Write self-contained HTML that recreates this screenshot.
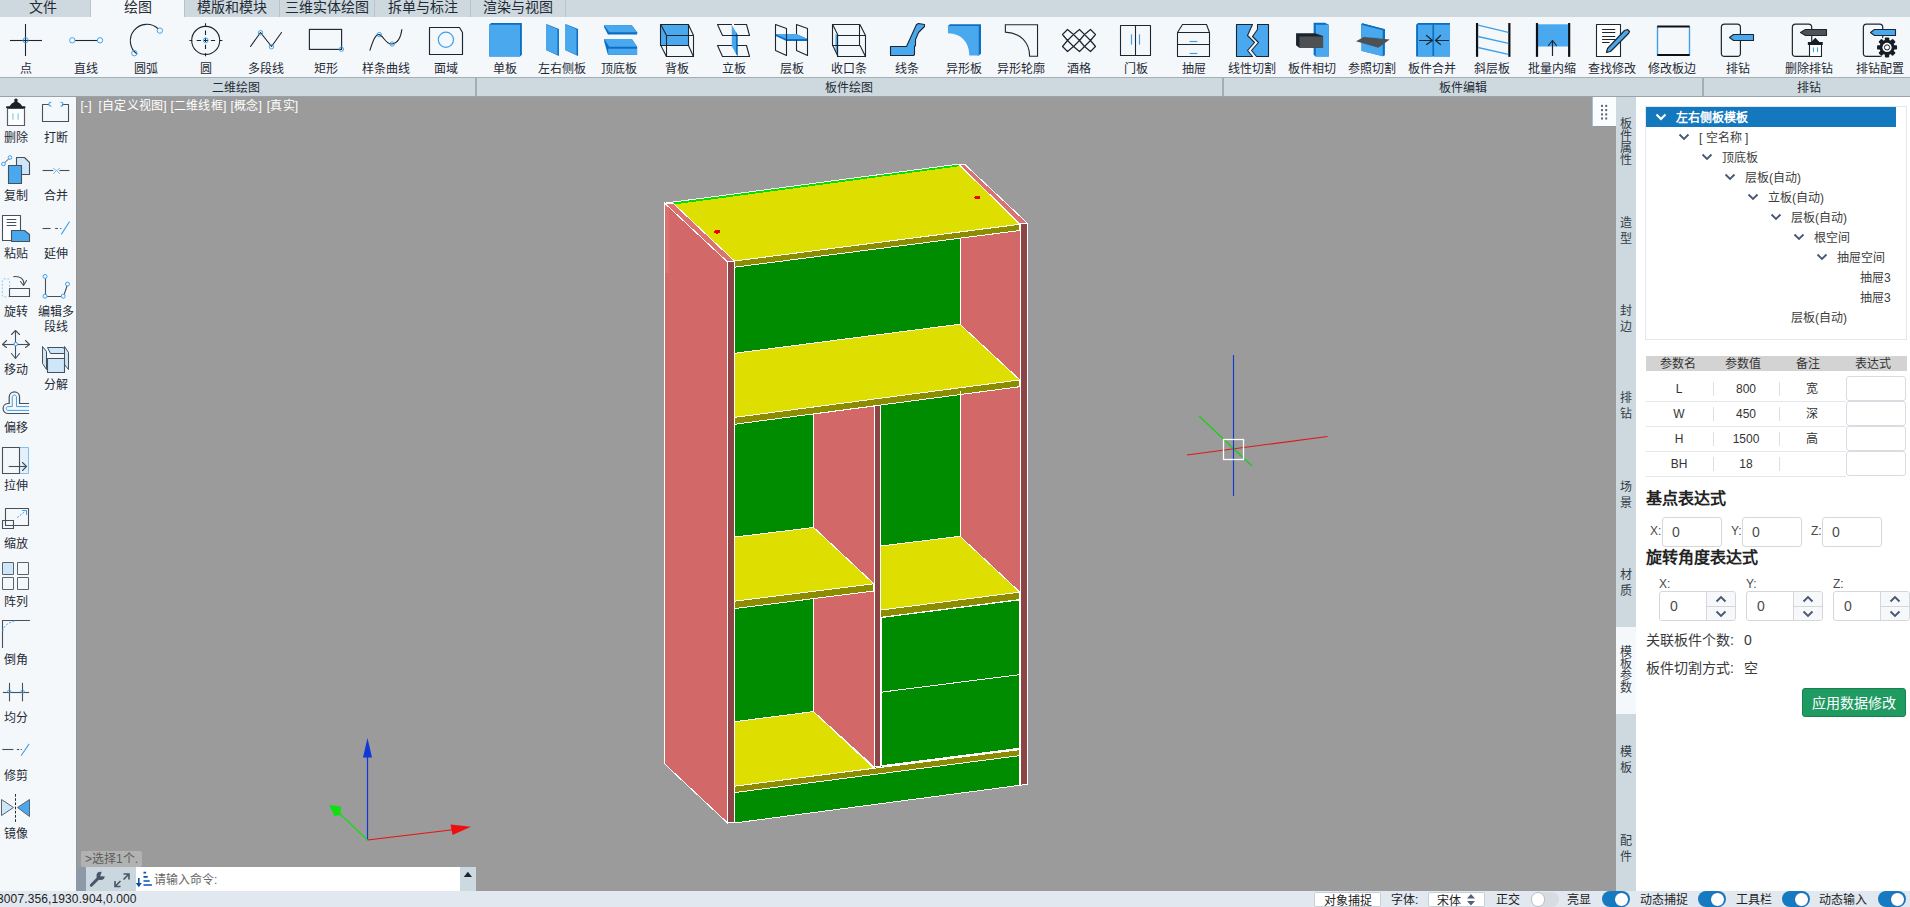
<!DOCTYPE html>
<html lang="zh-CN"><head><meta charset="utf-8"><title>CAD</title>
<style>
html,body{margin:0;padding:0;}
body{width:1910px;height:907px;overflow:hidden;position:relative;background:#f5f8fb;font-family:"Liberation Sans",sans-serif;font-size:12px;color:#1f2a35;}
div,span{box-sizing:border-box;}
.abs{position:absolute;}
#tabbar{position:absolute;left:0;top:0;width:1910px;height:17px;background:#ced9df;}
.tab{position:absolute;top:0;height:17px;line-height:15px;font-size:14px;text-align:center;color:#1f2a35;border-right:1px solid #b9c3cb;white-space:nowrap;}
.tab.act{background:#f5f8fb;border-right:1px solid #b9c3cb;}
#ribbon{position:absolute;left:0;top:17px;width:1910px;height:60px;background:#f5f8fb;}
.rl{position:absolute;top:62px;width:80px;height:15px;line-height:15px;text-align:center;font-size:12px;white-space:nowrap;color:#1f2a35;}
#grp{position:absolute;left:0;top:77px;width:1910px;height:20px;background:#ced9df;border-top:1px solid #a5afb7;border-bottom:1px solid #99a3ab;}
.gl{position:absolute;top:2px;height:17px;line-height:17px;text-align:center;font-size:12px;color:#1f2a35;}
.gs{position:absolute;top:0;width:2px;height:18px;background:#a2aeb5;}
#left{position:absolute;left:0;top:97px;width:76px;height:794px;background:#f5f8fb;}
.ll{position:absolute;width:44px;line-height:15px;text-align:center;font-size:12px;color:#1f2a35;}
#view{position:absolute;left:76px;top:97px;width:1540px;height:794px;border-left:1px solid #8f959b;background:#9b9b9b;}
#vtabs{position:absolute;left:1616px;top:97px;width:20px;height:794px;background:#ced9df;}
.vt{position:absolute;left:0;width:20px;text-align:center;font-size:12px;line-height:12px;color:#333c46;}
#right{position:absolute;left:1636px;top:97px;width:274px;height:794px;background:#fff;}
#status{position:absolute;left:0;top:891px;width:1910px;height:16px;background:#e1e8ef;}
</style></head><body>

<div id="tabbar">
<div class="tab" style="left:-5px;width:96px">文件</div>
<div class="tab act" style="left:91px;width:94px">绘图</div>
<div class="tab" style="left:185px;width:95px">模版和模块</div>
<div class="tab" style="left:280px;width:95px">三维实体绘图</div>
<div class="tab" style="left:375px;width:96px">拆单与标注</div>
<div class="tab" style="left:471px;width:95px">渲染与视图</div>
</div>
<div id="ribbon"></div>
<div class="rl" style="left:-14px">点</div>
<div class="rl" style="left:46px">直线</div>
<div class="rl" style="left:106px">圆弧</div>
<div class="rl" style="left:166px">圆</div>
<div class="rl" style="left:226px">多段线</div>
<div class="rl" style="left:286px">矩形</div>
<div class="rl" style="left:346px">样条曲线</div>
<div class="rl" style="left:406px">面域</div>
<div class="rl" style="left:465px">单板</div>
<div class="rl" style="left:522px">左右侧板</div>
<div class="rl" style="left:579px">顶底板</div>
<div class="rl" style="left:637px">背板</div>
<div class="rl" style="left:694px">立板</div>
<div class="rl" style="left:752px">层板</div>
<div class="rl" style="left:809px">收口条</div>
<div class="rl" style="left:867px">线条</div>
<div class="rl" style="left:924px">异形板</div>
<div class="rl" style="left:981px">异形轮廓</div>
<div class="rl" style="left:1039px">酒格</div>
<div class="rl" style="left:1096px">门板</div>
<div class="rl" style="left:1154px">抽屉</div>
<div class="rl" style="left:1212px">线性切割</div>
<div class="rl" style="left:1272px">板件相切</div>
<div class="rl" style="left:1332px">参照切割</div>
<div class="rl" style="left:1392px">板件合并</div>
<div class="rl" style="left:1452px">斜层板</div>
<div class="rl" style="left:1512px">批量内缩</div>
<div class="rl" style="left:1572px">查找修改</div>
<div class="rl" style="left:1632px">修改板边</div>
<div class="rl" style="left:1698px">排钻</div>
<div class="rl" style="left:1769px">删除排钻</div>
<div class="rl" style="left:1840px">排钻配置</div>
<div id="grp">
<div class="gl" style="left:-4px;width:480px">二维绘图</div>
<div class="gl" style="left:475px;width:748px">板件绘图</div>
<div class="gl" style="left:1222px;width:481px">板件编辑</div>
<div class="gl" style="left:1708px;width:202px">排钻</div>
<div class="gs" style="left:475px"></div>
<div class="gs" style="left:1222px"></div>
<div class="gs" style="left:1702px"></div>
</div>
<div id="left"></div>
<div class="ll" style="left:-6px;top:131px">删除</div>
<div class="ll" style="left:-6px;top:189px">复制</div>
<div class="ll" style="left:-6px;top:247px">粘贴</div>
<div class="ll" style="left:-6px;top:305px">旋转</div>
<div class="ll" style="left:-6px;top:363px">移动</div>
<div class="ll" style="left:-6px;top:421px">偏移</div>
<div class="ll" style="left:-6px;top:479px">拉伸</div>
<div class="ll" style="left:-6px;top:537px">缩放</div>
<div class="ll" style="left:-6px;top:595px">阵列</div>
<div class="ll" style="left:-6px;top:653px">倒角</div>
<div class="ll" style="left:-6px;top:711px">均分</div>
<div class="ll" style="left:-6px;top:769px">修剪</div>
<div class="ll" style="left:-6px;top:827px">镜像</div>
<div class="ll" style="left:34px;top:131px">打断</div>
<div class="ll" style="left:34px;top:189px">合并</div>
<div class="ll" style="left:34px;top:247px">延伸</div>
<div class="ll" style="left:34px;top:305px">编辑多<br>段线</div>
<div class="ll" style="left:34px;top:378px">分解</div>
<div id="view"></div>
<svg class="abs" style="left:0;top:0" width="1910" height="907" viewBox="0 0 1910 907" shape-rendering="crispEdges">
<polygon points="664.7,203.2 727.6,262.0 727.6,823.0 664.7,764.0" fill="#d26868" stroke="#ffffff" stroke-width="1"/>
<polygon points="665.4,204.0 669.3,207.6 669.3,273.0 665.4,273.0" fill="#da7070"/>
<polygon points="734.4,261.0 960.0,232.0 960.0,760.0 734.4,793.0" fill="#008c00"/>
<polygon points="960.0,164.7 1020.0,224.0 1020.0,784.0 960.0,720.0" fill="#d26868"/>
<polygon points="673.1,203.3 959.3,164.9 1019.8,224.2 734.4,261.0" fill="#dede00" stroke="#ffffff" stroke-width="1"/>
<line x1="674.0" y1="203.4" x2="959.3" y2="165.2" stroke="#00e000" stroke-width="2"/>
<line x1="666.0" y1="203.0" x2="959.3" y2="164.0" stroke="#ffffff" stroke-width="1"/>
<polygon points="734.4,261.0 1019.8,224.3 1019.8,230.5 734.4,267.2" fill="#8c8c00" stroke="#ffffff" stroke-width="1"/>
<ellipse cx="717.3" cy="231.8" rx="3" ry="1.8" fill="#ee0000"/>
<ellipse cx="977.4" cy="197.6" rx="3" ry="1.8" fill="#ee0000"/>
<line x1="960.0" y1="238.0" x2="960.0" y2="324.0" stroke="#ffffff" stroke-width="1"/>
<polygon points="734.4,353.3 959.9,324.2 1019.8,379.9 734.4,417.4" fill="#dede00" stroke="#ffffff" stroke-width="1"/>
<polygon points="734.4,417.4 1019.8,379.9 1019.8,386.7 734.4,424.3" fill="#8c8c00" stroke="#ffffff" stroke-width="1"/>
<polygon points="813.5,414.0 874.2,406.0 874.2,767.0 813.5,711.6" fill="#d26868" stroke="#ffffff" stroke-width="1"/>
<polygon points="874.5,406.0 880.5,405.2 880.5,766.0 874.5,766.8" fill="#8c4547" stroke="#ffffff" stroke-width="1"/>
<line x1="960.0" y1="391.0" x2="960.0" y2="536.0" stroke="#ffffff" stroke-width="1"/>
<polygon points="734.4,537.1 813.7,527.5 873.9,583.8 734.4,601.2" fill="#dede00" stroke="#ffffff" stroke-width="1"/>
<polygon points="734.4,601.2 873.9,583.8 873.9,591.0 734.4,608.6" fill="#8c8c00" stroke="#ffffff" stroke-width="1"/>
<polygon points="880.9,546.0 960.0,536.3 1019.8,592.1 880.9,610.0" fill="#dede00" stroke="#ffffff" stroke-width="1"/>
<polygon points="880.9,610.0 1019.8,592.1 1019.8,599.5 880.9,617.3" fill="#8c8c00" stroke="#ffffff" stroke-width="1"/>
<polygon points="881.9,617.5 1019.0,600.0 1019.0,674.7 881.9,692.1" fill="#008c00" stroke="#ffffff" stroke-width="1"/>
<polygon points="881.9,692.1 1019.0,674.7 1019.0,748.3 881.9,765.7" fill="#008c00" stroke="#ffffff" stroke-width="1"/>
<polygon points="734.4,721.7 813.6,711.6 873.9,768.2 734.4,786.2" fill="#dede00" stroke="#ffffff" stroke-width="1"/>
<polygon points="734.4,786.2 1019.8,749.6 1019.8,755.6 734.4,792.6" fill="#8c8c00" stroke="#ffffff" stroke-width="1"/>
<polygon points="881.9,765.5 1019.3,748.1 1019.3,749.8 881.9,767.5" fill="#ffffff"/>
<polygon points="734.4,792.6 1019.8,755.6 1019.8,785.3 734.4,823.0" fill="#008c00" stroke="#ffffff" stroke-width="1"/>
<polygon points="664.7,203.2 673.1,203.2 734.4,261.0 727.6,262.0" fill="#da7272" stroke="#ffffff" stroke-width="1"/>
<polygon points="727.6,262.0 734.4,261.0 734.4,822.3 727.6,823.0" fill="#8c4547" stroke="#ffffff" stroke-width="1"/>
<polygon points="959.3,164.7 965.0,164.7 1027.5,223.3 1020.0,224.0" fill="#da7272" stroke="#ffffff" stroke-width="1"/>
<polygon points="1020.3,224.0 1027.5,223.3 1027.5,784.3 1020.3,785.2" fill="#8c4547" stroke="#ffffff" stroke-width="1"/>
</svg>
<svg class="abs" style="left:0;top:0" width="1910" height="907" viewBox="0 0 1910 907">
<line x1="1187.0" y1="455.0" x2="1327.5" y2="436.5" stroke="#e01818" stroke-width="1.1"/>
<line x1="1199.0" y1="416.0" x2="1252.0" y2="466.0" stroke="#18d018" stroke-width="1.2"/>
<line x1="1233.5" y1="355.0" x2="1233.5" y2="496.0" stroke="#1038d8" stroke-width="1.1"/>
<rect x="1223.5" y="439.5" width="20" height="20" fill="none" stroke="#fff" stroke-width="1.3"/>
<line x1="367.5" y1="840.0" x2="367.5" y2="750.0" stroke="#1038d8" stroke-width="1.2"/>
<polygon points="367.5,738 363,757.5 372,757.5" fill="#1038d8"/>
<line x1="367.5" y1="840.0" x2="455.0" y2="829.5" stroke="#ee1010" stroke-width="1.2"/>
<polygon points="471,826.8 450.5,824.5 452.5,835" fill="#ee1010"/>
<line x1="367.5" y1="840.0" x2="338.0" y2="812.0" stroke="#10e010" stroke-width="1.2"/>
<polygon points="329,805 341,806.5 340.5,815 334.5,816" fill="#10e010"/>
</svg>
<div class="abs" style="left:80.5px;top:99px;font-size:12px;line-height:15px;color:#fff;white-space:nowrap;letter-spacing:0.25px;">[-]</div>
<div class="abs" style="left:98.5px;top:99px;font-size:12px;line-height:15px;color:#fff;white-space:nowrap;letter-spacing:0.25px;">[自定义视图]</div>
<div class="abs" style="left:170.4px;top:99px;font-size:12px;line-height:15px;color:#fff;white-space:nowrap;letter-spacing:0.25px;">[二维线框]</div>
<div class="abs" style="left:230.5px;top:99px;font-size:12px;line-height:15px;color:#fff;white-space:nowrap;letter-spacing:0.25px;">[概念]</div>
<div class="abs" style="left:266.7px;top:99px;font-size:12px;line-height:15px;color:#fff;white-space:nowrap;letter-spacing:0.25px;">[真实]</div>
<div class="abs" style="left:1592px;top:97px;width:24px;height:30px;background:#fafcfd;border-left:1px solid #9cc3e6;border-bottom:1px solid #8e98a4;"></div>
<svg class="abs" style="left:1592px;top:97px" width="23" height="29"><rect x="9" y="7.9" width="2" height="2" fill="#5a6478"/><rect x="9" y="12.1" width="2" height="2" fill="#5a6478"/><rect x="9" y="16.4" width="2" height="2" fill="#5a6478"/><rect x="9" y="20.5" width="2" height="2" fill="#5a6478"/><rect x="13.2" y="7.9" width="2" height="2" fill="#5a6478"/><rect x="13.2" y="12.1" width="2" height="2" fill="#5a6478"/><rect x="13.2" y="16.4" width="2" height="2" fill="#5a6478"/><rect x="13.2" y="20.5" width="2" height="2" fill="#5a6478"/></svg>
<div class="abs" style="left:81px;top:851px;width:61px;height:16px;background:#b2b2b2;border-radius:2px;color:#5c5c5c;font-size:12px;line-height:17px;padding-left:4px;white-space:nowrap;overflow:hidden;">&gt;选择1个.</div>
<div class="abs" style="left:76px;top:867px;width:10px;height:24px;background:#8d99a6;"></div>
<div class="abs" style="left:86px;top:867px;width:50px;height:24px;background:#cbd7de;"></div>
<div class="abs" style="left:136px;top:867px;width:324px;height:24px;background:#fff;"></div>
<div class="abs" style="left:460px;top:867px;width:16px;height:24px;background:#cdd9e0;"></div>
<div class="abs" style="left:154px;top:872px;font-size:12px;line-height:16px;color:#666;white-space:nowrap;">请输入命令:</div>
<svg class="abs" style="left:76px;top:867px" width="400" height="24" viewBox="76 867 400 24"><polygon points="463.8,877 472,877 467.9,871.8" fill="#1c2430"/><path d="M91.3,885.2 L98.6,877.9" stroke="#4a5568" stroke-width="3" stroke-linecap="round" fill="none"/><circle cx="100.6" cy="875.9" r="4.1" fill="#4a5568"/><polygon points="100.2,876.3 102.2,870 108,876.5" fill="#cbd7de"/><path d="M123.5,874 l5.5,0 0,5.5 M129,874 l-5.5,5.5 M120.5,886.5 l-5.5,0 0,-5.5 M115,886.5 l5.5,-5.5" fill="none" stroke="#4a5568" stroke-width="1.6"/><path d="M138.8,878 v7" fill="none" stroke="#0a50b4" stroke-width="1.6"/><polygon points="135.8,883 141.8,883 138.8,887.2" fill="#0a50b4"/><path d="M143.5,872.6 h2.6 M143.5,876.8 h4.2 M143.5,881 h6.2 M143.5,885 h8.4" stroke="#0a50b4" stroke-width="1.7"/></svg>
<div id="vtabs"></div>
<div class="abs" style="left:1616px;top:627px;width:20px;height:87px;background:#f5f8fb;"></div>
<div class="vt" style="left:1616px;top:118px;line-height:12px">板<br>件<br>属<br>性</div>
<div class="vt" style="left:1616px;top:215px;line-height:16px">造<br>型</div>
<div class="vt" style="left:1616px;top:303px;line-height:16px">封<br>边</div>
<div class="vt" style="left:1616px;top:390px;line-height:16px">排<br>钻</div>
<div class="vt" style="left:1616px;top:479px;line-height:16px">场<br>景</div>
<div class="vt" style="left:1616px;top:567px;line-height:16px">材<br>质</div>
<div class="vt" style="left:1616px;top:646px;line-height:12px">模<br>板<br>参<br>数</div>
<div class="vt" style="left:1616px;top:744px;line-height:16px">模<br>板</div>
<div class="vt" style="left:1616px;top:833px;line-height:16px">配<br>件</div>
<div id="right"></div>
<div class="abs" style="left:1645px;top:106px;width:262px;height:234px;border:1px solid #e3e6ea;background:#fff;"></div>
<div class="abs" style="left:1646px;top:107px;width:250px;height:20px;background:#1478be;"></div>
<div class="abs" style="left:1676px;top:110px;line-height:16px;font-size:12px;color:#fff;font-weight:bold;white-space:nowrap;">左右侧板模板</div>
<div class="abs" style="left:1699px;top:130px;line-height:16px;font-size:12px;color:#3c3c3c;font-weight:normal;white-space:nowrap;">[ 空名称 ]</div>
<div class="abs" style="left:1722px;top:150px;line-height:16px;font-size:12px;color:#3c3c3c;font-weight:normal;white-space:nowrap;">顶底板</div>
<div class="abs" style="left:1745px;top:170px;line-height:16px;font-size:12px;color:#3c3c3c;font-weight:normal;white-space:nowrap;">层板(自动)</div>
<div class="abs" style="left:1768px;top:190px;line-height:16px;font-size:12px;color:#3c3c3c;font-weight:normal;white-space:nowrap;">立板(自动)</div>
<div class="abs" style="left:1791px;top:210px;line-height:16px;font-size:12px;color:#3c3c3c;font-weight:normal;white-space:nowrap;">层板(自动)</div>
<div class="abs" style="left:1814px;top:230px;line-height:16px;font-size:12px;color:#3c3c3c;font-weight:normal;white-space:nowrap;">根空间</div>
<div class="abs" style="left:1837px;top:250px;line-height:16px;font-size:12px;color:#3c3c3c;font-weight:normal;white-space:nowrap;">抽屉空间</div>
<div class="abs" style="left:1860px;top:270px;line-height:16px;font-size:12px;color:#3c3c3c;font-weight:normal;white-space:nowrap;">抽屉3</div>
<div class="abs" style="left:1860px;top:290px;line-height:16px;font-size:12px;color:#3c3c3c;font-weight:normal;white-space:nowrap;">抽屉3</div>
<div class="abs" style="left:1791px;top:310px;line-height:16px;font-size:12px;color:#3c3c3c;font-weight:normal;white-space:nowrap;">层板(自动)</div>
<svg class="abs" style="left:0;top:0" width="1910" height="907" viewBox="0 0 1910 907"><path d="M1656.5,114.5 l4.5,4.5 4.5,-4.5" fill="none" stroke="#fff" stroke-width="2.1"/><path d="M1679.5,134.5 l4.5,4.5 4.5,-4.5" fill="none" stroke="#4a5878" stroke-width="1.9"/><path d="M1702.5,154.5 l4.5,4.5 4.5,-4.5" fill="none" stroke="#4a5878" stroke-width="1.9"/><path d="M1725.5,174.5 l4.5,4.5 4.5,-4.5" fill="none" stroke="#4a5878" stroke-width="1.9"/><path d="M1748.5,194.5 l4.5,4.5 4.5,-4.5" fill="none" stroke="#4a5878" stroke-width="1.9"/><path d="M1771.5,214.5 l4.5,4.5 4.5,-4.5" fill="none" stroke="#4a5878" stroke-width="1.9"/><path d="M1794.5,234.5 l4.5,4.5 4.5,-4.5" fill="none" stroke="#4a5878" stroke-width="1.9"/><path d="M1817.5,254.5 l4.5,4.5 4.5,-4.5" fill="none" stroke="#4a5878" stroke-width="1.9"/></svg>
<div class="abs" style="left:1646px;top:356px;width:261px;height:15px;background:#d3d3d3;"></div>
<div class="abs" style="left:1648px;top:357px;width:60px;text-align:center;line-height:15px;font-size:12px;color:#333;">参数名</div>
<div class="abs" style="left:1713px;top:357px;width:60px;text-align:center;line-height:15px;font-size:12px;color:#333;">参数值</div>
<div class="abs" style="left:1778px;top:357px;width:60px;text-align:center;line-height:15px;font-size:12px;color:#333;">备注</div>
<div class="abs" style="left:1843px;top:357px;width:60px;text-align:center;line-height:15px;font-size:12px;color:#333;">表达式</div>
<div class="abs" style="left:1646px;top:401px;width:200px;height:1px;background:#e4e7ea;"></div>
<div class="abs" style="left:1713px;top:382px;width:1px;height:14px;background:#dcdfe3;"></div>
<div class="abs" style="left:1779px;top:382px;width:1px;height:14px;background:#dcdfe3;"></div>
<div class="abs" style="left:1649px;top:381px;width:60px;text-align:center;line-height:16px;font-size:12px;color:#333;">L</div>
<div class="abs" style="left:1716px;top:381px;width:60px;text-align:center;line-height:16px;font-size:12px;color:#333;">800</div>
<div class="abs" style="left:1782px;top:381px;width:60px;text-align:center;line-height:16px;font-size:12px;color:#333;">宽</div>
<div class="abs" style="left:1846px;top:376px;width:60px;height:25px;border:1px solid #d9dde1;border-radius:3px;background:#fff;"></div>
<div class="abs" style="left:1646px;top:426px;width:200px;height:1px;background:#e4e7ea;"></div>
<div class="abs" style="left:1713px;top:407px;width:1px;height:14px;background:#dcdfe3;"></div>
<div class="abs" style="left:1779px;top:407px;width:1px;height:14px;background:#dcdfe3;"></div>
<div class="abs" style="left:1649px;top:406px;width:60px;text-align:center;line-height:16px;font-size:12px;color:#333;">W</div>
<div class="abs" style="left:1716px;top:406px;width:60px;text-align:center;line-height:16px;font-size:12px;color:#333;">450</div>
<div class="abs" style="left:1782px;top:406px;width:60px;text-align:center;line-height:16px;font-size:12px;color:#333;">深</div>
<div class="abs" style="left:1846px;top:401px;width:60px;height:25px;border:1px solid #d9dde1;border-radius:3px;background:#fff;"></div>
<div class="abs" style="left:1646px;top:451px;width:200px;height:1px;background:#e4e7ea;"></div>
<div class="abs" style="left:1713px;top:432px;width:1px;height:14px;background:#dcdfe3;"></div>
<div class="abs" style="left:1779px;top:432px;width:1px;height:14px;background:#dcdfe3;"></div>
<div class="abs" style="left:1649px;top:431px;width:60px;text-align:center;line-height:16px;font-size:12px;color:#333;">H</div>
<div class="abs" style="left:1716px;top:431px;width:60px;text-align:center;line-height:16px;font-size:12px;color:#333;">1500</div>
<div class="abs" style="left:1782px;top:431px;width:60px;text-align:center;line-height:16px;font-size:12px;color:#333;">高</div>
<div class="abs" style="left:1846px;top:426px;width:60px;height:25px;border:1px solid #d9dde1;border-radius:3px;background:#fff;"></div>
<div class="abs" style="left:1646px;top:476px;width:200px;height:1px;background:#e4e7ea;"></div>
<div class="abs" style="left:1713px;top:457px;width:1px;height:14px;background:#dcdfe3;"></div>
<div class="abs" style="left:1779px;top:457px;width:1px;height:14px;background:#dcdfe3;"></div>
<div class="abs" style="left:1649px;top:456px;width:60px;text-align:center;line-height:16px;font-size:12px;color:#333;">BH</div>
<div class="abs" style="left:1716px;top:456px;width:60px;text-align:center;line-height:16px;font-size:12px;color:#333;">18</div>
<div class="abs" style="left:1782px;top:456px;width:60px;text-align:center;line-height:16px;font-size:12px;color:#333;"></div>
<div class="abs" style="left:1846px;top:451px;width:60px;height:25px;border:1px solid #d9dde1;border-radius:3px;background:#fff;"></div>
<div class="abs" style="left:1646px;top:489px;font-size:16px;font-weight:bold;line-height:20px;color:#222;">基点表达式</div>
<div class="abs" style="left:1650px;top:523px;font-size:12px;line-height:17px;color:#4a4a4a;">X:</div>
<div class="abs" style="left:1662px;top:517px;width:60px;height:30px;border:1px solid #d4d8dc;border-radius:3px;background:#fff;font-size:14px;line-height:28px;padding-left:9px;color:#4a4a4a;">0</div>
<div class="abs" style="left:1731px;top:523px;font-size:12px;line-height:17px;color:#4a4a4a;">Y:</div>
<div class="abs" style="left:1742px;top:517px;width:60px;height:30px;border:1px solid #d4d8dc;border-radius:3px;background:#fff;font-size:14px;line-height:28px;padding-left:9px;color:#4a4a4a;">0</div>
<div class="abs" style="left:1811px;top:523px;font-size:12px;line-height:17px;color:#4a4a4a;">Z:</div>
<div class="abs" style="left:1822px;top:517px;width:60px;height:30px;border:1px solid #d4d8dc;border-radius:3px;background:#fff;font-size:14px;line-height:28px;padding-left:9px;color:#4a4a4a;">0</div>
<div class="abs" style="left:1646px;top:548px;font-size:16px;font-weight:bold;line-height:20px;color:#222;">旋转角度表达式</div>
<div class="abs" style="left:1659px;top:576px;font-size:12px;line-height:17px;color:#4a4a4a;">X:</div>
<div class="abs" style="left:1659px;top:591px;width:77px;height:30px;border:1px solid #d4d8dc;border-radius:3px;background:#fff;font-size:14px;line-height:28px;padding-left:10px;color:#4a4a4a;">0</div>
<div class="abs" style="left:1706px;top:592px;width:29px;height:28px;border-left:1px solid #d4d8dc;background:#f7f8f9;border-radius:0 3px 3px 0;"></div>
<div class="abs" style="left:1706px;top:606px;width:29px;height:1px;background:#d4d8dc;"></div>
<div class="abs" style="left:1746px;top:576px;font-size:12px;line-height:17px;color:#4a4a4a;">Y:</div>
<div class="abs" style="left:1746px;top:591px;width:77px;height:30px;border:1px solid #d4d8dc;border-radius:3px;background:#fff;font-size:14px;line-height:28px;padding-left:10px;color:#4a4a4a;">0</div>
<div class="abs" style="left:1793px;top:592px;width:29px;height:28px;border-left:1px solid #d4d8dc;background:#f7f8f9;border-radius:0 3px 3px 0;"></div>
<div class="abs" style="left:1793px;top:606px;width:29px;height:1px;background:#d4d8dc;"></div>
<div class="abs" style="left:1833px;top:576px;font-size:12px;line-height:17px;color:#4a4a4a;">Z:</div>
<div class="abs" style="left:1833px;top:591px;width:77px;height:30px;border:1px solid #d4d8dc;border-radius:3px;background:#fff;font-size:14px;line-height:28px;padding-left:10px;color:#4a4a4a;">0</div>
<div class="abs" style="left:1880px;top:592px;width:29px;height:28px;border-left:1px solid #d4d8dc;background:#f7f8f9;border-radius:0 3px 3px 0;"></div>
<div class="abs" style="left:1880px;top:606px;width:29px;height:1px;background:#d4d8dc;"></div>
<svg class="abs" style="left:0;top:0" width="1910" height="907" viewBox="0 0 1910 907"><path d="M1716.5,601.5 l4.5,-4.5 4.5,4.5 M1716.5,611.5 l4.5,4.5 4.5,-4.5" fill="none" stroke="#4a5878" stroke-width="1.9"/><path d="M1803.5,601.5 l4.5,-4.5 4.5,4.5 M1803.5,611.5 l4.5,4.5 4.5,-4.5" fill="none" stroke="#4a5878" stroke-width="1.9"/><path d="M1890.5,601.5 l4.5,-4.5 4.5,4.5 M1890.5,611.5 l4.5,4.5 4.5,-4.5" fill="none" stroke="#4a5878" stroke-width="1.9"/></svg>
<div class="abs" style="left:1646px;top:631px;font-size:14px;line-height:18px;color:#3a3a3a;white-space:nowrap;">关联板件个数:</div><div class="abs" style="left:1744px;top:631px;font-size:14px;line-height:18px;color:#3a3a3a;">0</div>
<div class="abs" style="left:1646px;top:659px;font-size:14px;line-height:18px;color:#3a3a3a;white-space:nowrap;">板件切割方式:</div><div class="abs" style="left:1744px;top:659px;font-size:14px;line-height:18px;color:#3a3a3a;">空</div>
<div class="abs" style="left:1802px;top:688px;width:104px;height:29px;background:#1f9b62;border:1px solid #17804f;border-radius:3px;color:#fff;font-size:14px;line-height:28px;text-align:center;">应用数据修改</div>
<div id="status"></div>
<div class="abs" style="left:-3px;top:891px;font-size:12px;line-height:17px;color:#222;white-space:nowrap;letter-spacing:0.12px;">3007.356,1930.904,0.000</div>
<div class="abs" style="left:1314px;top:892px;width:67px;height:15px;background:#fff;border:1px solid #c9cfd5;border-radius:2px;font-size:12px;line-height:16px;text-align:center;color:#222;overflow:hidden;">对象捕捉</div>
<div class="abs" style="left:1391px;top:892px;font-size:12px;line-height:16px;color:#222;white-space:nowrap;">字体:</div>
<div class="abs" style="left:1428px;top:892px;width:57px;height:15px;background:#fff;border:1px solid #c9cfd5;border-radius:2px;font-size:12px;line-height:16px;padding-left:8px;color:#222;overflow:hidden;">宋体</div>
<svg class="abs" style="left:1465px;top:892px" width="12" height="15"><polygon points="2,6.5 10,6.5 6,2" fill="#566079"/><polygon points="2,9 10,9 6,13.5" fill="#566079"/></svg>
<div class="abs" style="left:1496px;top:892px;font-size:12px;line-height:16px;color:#222;white-space:nowrap;">正交</div>
<div class="abs" style="left:1530.5px;top:892px;width:28px;height:14.5px;border-radius:7.5px;background:#d6dce1;"></div><div class="abs" style="left:1530.5px;top:892px;width:14.5px;height:14.5px;border-radius:7.5px;background:#fff;border:1px solid #b9bfc5;"></div>
<div class="abs" style="left:1567px;top:892px;font-size:12px;line-height:16px;color:#222;white-space:nowrap;">亮显</div>
<div class="abs" style="left:1601.6px;top:891px;width:28px;height:16px;border-radius:8px;background:#157abf;"></div><div class="abs" style="left:1613.6px;top:891.6px;width:15.2px;height:15.2px;border-radius:8px;background:#fff;border:1.4px solid #0b62b5;"></div>
<div class="abs" style="left:1640px;top:892px;font-size:12px;line-height:16px;color:#222;white-space:nowrap;">动态捕捉</div>
<div class="abs" style="left:1697.6px;top:891px;width:28px;height:16px;border-radius:8px;background:#157abf;"></div><div class="abs" style="left:1709.6px;top:891.6px;width:15.2px;height:15.2px;border-radius:8px;background:#fff;border:1.4px solid #0b62b5;"></div>
<div class="abs" style="left:1736px;top:892px;font-size:12px;line-height:16px;color:#222;white-space:nowrap;">工具栏</div>
<div class="abs" style="left:1781.6px;top:891px;width:28px;height:16px;border-radius:8px;background:#157abf;"></div><div class="abs" style="left:1793.6px;top:891.6px;width:15.2px;height:15.2px;border-radius:8px;background:#fff;border:1.4px solid #0b62b5;"></div>
<div class="abs" style="left:1819px;top:892px;font-size:12px;line-height:16px;color:#222;white-space:nowrap;">动态输入</div>
<div class="abs" style="left:1877.6px;top:891px;width:28px;height:16px;border-radius:8px;background:#157abf;"></div><div class="abs" style="left:1889.6px;top:891.6px;width:15.2px;height:15.2px;border-radius:8px;background:#fff;border:1.4px solid #0b62b5;"></div>
<svg class="abs" style="left:0;top:0" width="1910" height="907" viewBox="0 0 1910 907">
<line x1="10.00" y1="40.50" x2="42.00" y2="40.50" stroke="#1c2631" stroke-width="1.1"/>
<line x1="25.50" y1="24.00" x2="25.50" y2="56.00" stroke="#1c2631" stroke-width="1.1"/>
<circle cx="25.60" cy="40.30" r="2.6" fill="none" stroke="#3f9fe8" stroke-width="0.95"/>
<line x1="75.00" y1="40.50" x2="97.50" y2="40.50" stroke="#1c2631" stroke-width="1.1"/>
<circle cx="72.30" cy="40.30" r="2.7" fill="none" stroke="#3f9fe8" stroke-width="0.95"/>
<circle cx="100.00" cy="40.30" r="2.7" fill="none" stroke="#3f9fe8" stroke-width="0.95"/>
<path d="M158.05,28.73 A16.5,16.5 0 1 0 137.10,54.15" fill="none" stroke="#1c2631" stroke-width="1.1"/>
<circle cx="159.90" cy="30.60" r="2.7" fill="none" stroke="#3f9fe8" stroke-width="0.95"/>
<circle cx="134.30" cy="53.20" r="2.7" fill="none" stroke="#3f9fe8" stroke-width="0.95"/>
<circle cx="205.70" cy="40.40" r="14" fill="none" stroke="#1c2631" stroke-width="1.1"/>
<line x1="189.40" y1="40.50" x2="222.40" y2="40.50" stroke="#1c2631" stroke-width="1.1" stroke-dasharray="2.9 4.4 4.3 2.8 4.2 2.9 4.2 4.2 3.1"/>
<line x1="205.50" y1="23.30" x2="205.50" y2="56.80" stroke="#1c2631" stroke-width="1.1" stroke-dasharray="2.9 4.4 4.3 2.8 4.2 2.9 4.2 4.2 3.1"/>
<circle cx="205.70" cy="40.40" r="2.4" fill="none" stroke="#3f9fe8" stroke-width="0.95"/>
<polyline points="250.50,46.50 260.50,32.50 271.50,46.50 281.50,32.50" fill="none" stroke="#1c2631" stroke-width="1.1" stroke-linejoin="round" stroke-linecap="round"/>
<circle cx="260.50" cy="32.71" r="2.2" fill="none" stroke="#3f9fe8" stroke-width="0.95"/>
<circle cx="271.44" cy="46.78" r="2.2" fill="none" stroke="#3f9fe8" stroke-width="0.95"/>
<rect x="309.4" y="29.4" width="32.2" height="20" fill="none" stroke="#1c2631" stroke-width="1.15"/>
<circle cx="341.40" cy="49.20" r="2.2" fill="none" stroke="#3f9fe8" stroke-width="0.95"/>
<path d="M369.8,50.6 C372.8,41.6 375.3,33.6 379.3,34.6 S386.2,45.0 392.2,44.0 S400.9,37.2 401.9,29.2" fill="none" stroke="#1c2631" stroke-width="1.1"/>
<circle cx="379.25" cy="34.59" r="2.2" fill="none" stroke="#3f9fe8" stroke-width="0.95"/>
<circle cx="392.20" cy="44.02" r="2.2" fill="none" stroke="#3f9fe8" stroke-width="0.95"/>
<polygon points="429.50,27.50 459.50,27.50 462.50,32.50 462.50,54.50 429.50,54.50" fill="none" stroke="#1c2631" stroke-width="1.15" stroke-linejoin="round"/>
<circle cx="445.90" cy="39.70" r="7.6" fill="none" stroke="#3f9fe8" stroke-width="1.2"/>
<polygon points="489.19,24.79 491.08,23.03 521.87,23.03 521.87,54.70 519.98,56.58 489.19,56.58" fill="#0b6ec2"/>
<polygon points="489.19,24.79 519.98,24.79 519.98,56.58 489.19,56.58" fill="#4aa8ee"/>
<polygon points="546.37,23.91 558.94,28.94 558.94,55.95 546.37,50.30" fill="#0b6ec2"/>
<polygon points="546.12,24.29 557.43,29.19 557.43,54.70 546.12,49.92" fill="#4aa8ee"/>
<polygon points="565.47,23.91 578.04,28.94 578.04,55.95 565.47,50.30" fill="#0b6ec2"/>
<polygon points="565.22,24.29 576.53,29.19 576.53,54.70 565.22,49.92" fill="#4aa8ee"/>
<polygon points="604.17,25.17 631.82,25.17 637.10,32.33 637.10,34.59 607.94,34.59 604.17,27.30" fill="#0b6ec2"/>
<polygon points="604.17,25.17 631.82,25.17 637.10,32.33 609.20,32.33" fill="#4aa8ee"/>
<polygon points="604.17,38.99 631.82,38.99 637.10,46.78 637.10,54.70 607.94,54.70 604.17,41.50" fill="#0b6ec2"/>
<polygon points="604.17,38.99 631.82,38.99 637.10,46.78 609.20,46.78" fill="#4aa8ee"/>
<polygon points="608.19,48.67 637.10,48.67 637.10,54.70 608.19,54.70" fill="#4aa8ee"/>
<polygon points="660.72,24.54 688.36,24.54 688.36,45.27 660.72,45.27" fill="#4aa8ee"/>
<polygon points="660.50,24.50 688.50,24.50 688.50,45.50 660.50,45.50" fill="none" stroke="#1c2631" stroke-width="1.1" stroke-linejoin="round"/>
<polygon points="666.50,35.50 693.50,35.50 693.50,56.50 666.50,56.50" fill="none" stroke="#1c2631" stroke-width="1.1" stroke-linejoin="round"/>
<line x1="660.72" y1="24.54" x2="666.37" y2="35.22" stroke="#1c2631" stroke-width="1.1"/>
<line x1="688.36" y1="24.54" x2="693.39" y2="35.22" stroke="#1c2631" stroke-width="1.1"/>
<line x1="688.36" y1="45.27" x2="693.39" y2="56.58" stroke="#1c2631" stroke-width="1.1"/>
<line x1="660.72" y1="45.27" x2="666.37" y2="56.58" stroke="#1c2631" stroke-width="1.1"/>
<polygon points="731.76,24.79 737.41,34.59 737.41,56.21 731.76,46.15" fill="#4aa8ee"/>
<polygon points="735.91,32.08 737.67,34.97 737.67,56.21 735.91,53.44" fill="#0b6ec2"/>
<polyline points="731.50,24.50 717.50,24.50 722.50,35.50 749.50,35.50 746.50,24.50 734.50,24.50" fill="none" stroke="#1c2631" stroke-width="1.1" stroke-linejoin="round" stroke-linecap="round"/>
<polyline points="731.50,45.50 717.50,45.50 722.50,56.50 749.50,56.50 746.50,45.50 737.50,45.50" fill="none" stroke="#1c2631" stroke-width="1.1" stroke-linejoin="round" stroke-linecap="round"/>
<polygon points="775.11,33.96 796.47,33.96 807.53,38.99 807.53,40.88 786.42,40.88 775.11,35.85" fill="#0b6ec2"/>
<polygon points="775.11,33.96 796.47,33.96 807.53,38.99 786.42,38.99" fill="#4aa8ee"/>
<polygon points="775.50,24.50 786.50,28.50 786.50,55.50 775.50,50.50" fill="none" stroke="#1c2631" stroke-width="1.1" stroke-linejoin="round"/>
<polyline points="796.50,33.50 796.50,24.50 807.50,28.50 807.50,55.50 796.50,50.50 796.50,40.50" fill="none" stroke="#1c2631" stroke-width="1.1" stroke-linejoin="round" stroke-linecap="round"/>
<polygon points="835.43,33.96 838.19,35.47 838.19,54.70 835.43,49.92" fill="#4aa8ee"/>
<polygon points="832.50,24.50 859.50,24.50 859.50,45.50 832.50,45.50" fill="none" stroke="#1c2631" stroke-width="1.1" stroke-linejoin="round"/>
<polygon points="837.50,35.50 865.50,35.50 865.50,56.50 837.50,56.50" fill="none" stroke="#1c2631" stroke-width="1.1" stroke-linejoin="round"/>
<line x1="832.66" y1="24.54" x2="837.94" y2="35.22" stroke="#1c2631" stroke-width="1.1"/>
<line x1="859.93" y1="24.54" x2="865.34" y2="35.22" stroke="#1c2631" stroke-width="1.1"/>
<line x1="859.93" y1="45.27" x2="865.34" y2="56.33" stroke="#1c2631" stroke-width="1.1"/>
<line x1="832.66" y1="45.27" x2="837.94" y2="56.33" stroke="#1c2631" stroke-width="1.1"/>
<polygon points="890.50,46.50 906.50,46.50 916.50,24.50 918.50,23.50 924.50,24.50 924.50,26.50 918.50,32.50 915.50,39.50 915.50,45.50 914.50,46.50 914.50,54.50 913.50,55.50 890.50,55.50" fill="#4aa8ee" stroke="#1c2631" stroke-width="1.1" stroke-linejoin="round"/>
<path d="M947.94,26.05 L949.82,24.16 L980.99,24.16 L980.99,53.69 L978.72,55.58 L977.47,55.58 L977.47,27.05 L947.94,27.05 Z" fill="#0b6ec2"/>
<path d="M947.94,26.05 L978.72,26.05 L978.72,55.58 L969.30,55.58 C969.30,42.13 961.13,33.59 947.94,33.34 Z" fill="#4aa8ee"/>
<path d="M1005.36,24.79 L1037.53,24.79 L1037.53,56.21 L1029.62,56.21 C1029.62,42.13 1020.19,32.71 1005.36,32.08 Z" fill="none" stroke="#1c2631" stroke-width="1.1"/>
<polygon points="1062.50,34.50 1067.50,29.50 1073.50,34.50 1067.50,40.50" fill="none" stroke="#1c2631" stroke-width="1.2" stroke-linejoin="round"/>
<polygon points="1062.50,46.50 1067.50,40.50 1073.50,46.50 1067.50,51.50" fill="none" stroke="#1c2631" stroke-width="1.2" stroke-linejoin="round"/>
<polygon points="1073.50,34.50 1079.50,29.50 1084.50,34.50 1079.50,40.50" fill="none" stroke="#1c2631" stroke-width="1.2" stroke-linejoin="round"/>
<polygon points="1073.50,46.50 1079.50,40.50 1084.50,46.50 1079.50,51.50" fill="none" stroke="#1c2631" stroke-width="1.2" stroke-linejoin="round"/>
<polygon points="1084.50,34.50 1090.50,29.50 1095.50,34.50 1090.50,40.50" fill="none" stroke="#1c2631" stroke-width="1.2" stroke-linejoin="round"/>
<polygon points="1084.50,46.50 1090.50,40.50 1095.50,46.50 1090.50,51.50" fill="none" stroke="#1c2631" stroke-width="1.2" stroke-linejoin="round"/>
<polygon points="1120.50,25.50 1150.50,25.50 1150.50,55.50 1120.50,55.50" fill="none" stroke="#1c2631" stroke-width="1.1" stroke-linejoin="round"/>
<line x1="1135.50" y1="25.17" x2="1135.50" y2="55.33" stroke="#1c2631" stroke-width="1.1"/>
<line x1="1131.50" y1="34.34" x2="1131.50" y2="44.65" stroke="#3f9fe8" stroke-width="1.2"/>
<line x1="1139.50" y1="34.34" x2="1139.50" y2="44.65" stroke="#3f9fe8" stroke-width="1.2"/>
<polyline points="1177.50,32.50 1182.50,24.50 1206.50,24.50 1209.50,32.50" fill="none" stroke="#1c2631" stroke-width="1.1" stroke-linejoin="round" stroke-linecap="round"/>
<polygon points="1177.50,32.50 1209.50,32.50 1209.50,56.50 1177.50,56.50" fill="none" stroke="#1c2631" stroke-width="1.1" stroke-linejoin="round"/>
<line x1="1177.56" y1="44.50" x2="1209.98" y2="44.50" stroke="#1c2631" stroke-width="1.1"/>
<line x1="1189.62" y1="41.50" x2="1197.41" y2="41.50" stroke="#3f9fe8" stroke-width="1.2"/>
<line x1="1189.62" y1="53.50" x2="1197.41" y2="53.50" stroke="#3f9fe8" stroke-width="1.2"/>
<polygon points="1236.50,24.50 1252.50,24.50 1247.50,35.50 1254.50,42.50 1247.50,50.50 1252.50,56.50 1236.50,56.50" fill="#4aa8ee" stroke="#1c2631" stroke-width="1.1" stroke-linejoin="round"/>
<polygon points="1257.50,24.50 1268.50,24.50 1268.50,56.50 1256.50,56.50 1251.50,50.50 1258.50,42.50 1252.50,36.50 1257.50,29.50" fill="#4aa8ee" stroke="#1c2631" stroke-width="1.1" stroke-linejoin="round"/>
<polygon points="1313.65,22.65 1324.96,22.65 1328.73,24.79 1328.73,56.58 1315.54,56.58 1313.65,54.70" fill="#0b6ec2"/>
<polygon points="1315.79,24.79 1328.73,24.79 1328.73,56.58 1315.79,56.58" fill="#4aa8ee"/>
<polygon points="1296.06,33.34 1314.91,33.34 1323.07,36.10 1323.07,47.79 1299.20,47.79 1296.06,45.27" fill="#1b232b"/>
<polygon points="1299.45,36.48 1323.07,36.48 1323.07,47.79 1299.45,47.79" fill="#4e5154"/>
<polygon points="1362.03,23.28 1384.90,29.31 1384.90,55.33 1382.76,56.21 1362.03,50.68" fill="#0b6ec2"/>
<polygon points="1361.15,24.79 1382.76,30.19 1382.76,56.21 1361.15,50.93" fill="#4aa8ee"/>
<polygon points="1356.00,41.13 1363.91,37.11 1389.67,39.62 1378.36,47.79" fill="#4e5154"/>
<polygon points="1362.03,23.28 1384.90,29.31 1384.90,38.61 1382.76,38.36 1363.91,36.85 1361.15,38.11 1361.15,24.79" fill="#0b6ec2"/>
<polygon points="1361.15,24.79 1382.76,30.19 1382.76,38.36 1363.91,36.85 1361.15,38.11" fill="#4aa8ee"/>
<polygon points="1416.11,24.79 1417.99,23.03 1450.03,23.03 1450.03,56.58 1416.11,56.58" fill="#0b6ec2"/>
<polygon points="1417.99,24.79 1432.44,24.79 1432.44,56.58 1417.99,56.58" fill="#4aa8ee"/>
<polygon points="1434.07,24.79 1450.03,24.79 1450.03,56.58 1434.07,56.58" fill="#4aa8ee"/>
<polyline points="1419.50,40.50 1431.50,40.50" fill="none" stroke="#1c2631" stroke-width="1.2" stroke-linejoin="round" stroke-linecap="round"/>
<polyline points="1426.50,35.50 1432.50,40.50 1426.50,44.50" fill="none" stroke="#1c2631" stroke-width="1.2" stroke-linejoin="round" stroke-linecap="round"/>
<polyline points="1448.50,40.50 1435.50,40.50" fill="none" stroke="#1c2631" stroke-width="1.2" stroke-linejoin="round" stroke-linecap="round"/>
<polyline points="1440.50,35.50 1435.50,40.50 1440.50,44.50" fill="none" stroke="#1c2631" stroke-width="1.2" stroke-linejoin="round" stroke-linecap="round"/>
<line x1="1477.05" y1="23.03" x2="1477.05" y2="56.83" stroke="#0d1116" stroke-width="2.2"/>
<line x1="1509.35" y1="23.03" x2="1509.35" y2="56.83" stroke="#0d1116" stroke-width="2.2"/>
<line x1="1477.93" y1="25.17" x2="1508.47" y2="32.33" stroke="#3f9fe8" stroke-width="1.4"/>
<line x1="1477.93" y1="36.48" x2="1508.47" y2="43.39" stroke="#3f9fe8" stroke-width="1.4"/>
<line x1="1477.93" y1="47.54" x2="1508.47" y2="54.32" stroke="#3f9fe8" stroke-width="1.4"/>
<polygon points="1537.74,24.29 1568.41,24.29 1568.41,46.53 1537.74,46.53" fill="#4aa8ee"/>
<line x1="1536.99" y1="23.03" x2="1536.99" y2="56.83" stroke="#0d1116" stroke-width="2.2"/>
<line x1="1569.16" y1="23.03" x2="1569.16" y2="56.83" stroke="#0d1116" stroke-width="2.2"/>
<polyline points="1552.50,55.50 1552.50,41.50" fill="none" stroke="#1c2631" stroke-width="1.2" stroke-linejoin="round" stroke-linecap="round"/>
<polyline points="1548.50,45.50 1552.50,40.50 1556.50,45.50" fill="none" stroke="#1c2631" stroke-width="1.2" stroke-linejoin="round" stroke-linecap="round"/>
<polygon points="1596.50,24.50 1620.50,24.50 1620.50,56.50 1596.50,56.50" fill="#fff" stroke="#1c2631" stroke-width="1.1" stroke-linejoin="round"/>
<line x1="1602.08" y1="29.50" x2="1615.28" y2="29.50" stroke="#1c2631" stroke-width="1"/>
<line x1="1602.08" y1="32.50" x2="1615.28" y2="32.50" stroke="#1c2631" stroke-width="1"/>
<line x1="1602.08" y1="36.50" x2="1615.28" y2="36.50" stroke="#1c2631" stroke-width="1"/>
<line x1="1602.08" y1="39.50" x2="1615.28" y2="39.50" stroke="#1c2631" stroke-width="1"/>
<line x1="1602.08" y1="42.50" x2="1609.62" y2="42.50" stroke="#1c2631" stroke-width="1"/>
<polygon points="1624.50,30.50 1627.50,29.50 1629.50,31.50 1628.50,33.50 1610.50,51.50 1606.50,52.50 1607.50,48.50" fill="#4aa8ee" stroke="#1c2631" stroke-width="1.2" stroke-linejoin="round"/>
<line x1="1657.50" y1="26.32" x2="1657.50" y2="55.44" stroke="#3f9fe8" stroke-width="1.4"/>
<line x1="1689.50" y1="26.32" x2="1689.50" y2="55.44" stroke="#3f9fe8" stroke-width="1.4"/>
<line x1="1657.23" y1="26.61" x2="1689.65" y2="26.61" stroke="#0d1116" stroke-width="2"/>
<line x1="1657.23" y1="55.01" x2="1689.65" y2="55.01" stroke="#0d1116" stroke-width="2"/>
<rect x="1721.35" y="24.17" width="19.08" height="32.28" rx="3.2" fill="none" stroke="#1c2631" stroke-width="1.2"/>
<polygon points="1729.50,37.50 1733.50,34.50 1753.50,34.50 1753.50,40.50 1733.50,40.50" fill="#4aa8ee" stroke="#1c2631" stroke-width="1.1" stroke-linejoin="round"/>
<rect x="1792.36" y="24.17" width="19.37" height="32.28" rx="3.2" fill="none" stroke="#1c2631" stroke-width="1.2"/>
<polygon points="1800.50,32.50 1805.50,29.50 1826.50,29.50 1826.50,35.50 1805.50,35.50" fill="#4e5258" stroke="#1c2631" stroke-width="1.1" stroke-linejoin="round"/>
<polygon points="1808.86,44.97 1821.77,44.97 1821.77,56.45 1808.86,56.45" fill="#f5f8fb"/>
<polygon points="1809.50,44.50 1821.50,44.50 1821.50,56.50 1809.50,56.50" fill="#fff" stroke="#1c2631" stroke-width="1.1" stroke-linejoin="round"/>
<polygon points="1807.85,42.10 1811.30,42.10 1815.31,37.80 1819.33,42.10 1822.77,42.10 1822.77,44.97 1807.85,44.97" fill="#161d25"/>
<line x1="1813.50" y1="47.41" x2="1813.50" y2="52.15" stroke="#3f9fe8" stroke-width="1.1"/>
<line x1="1817.50" y1="47.41" x2="1817.50" y2="52.15" stroke="#3f9fe8" stroke-width="1.1"/>
<rect x="1863.37" y="24.17" width="19.37" height="32.28" rx="3.2" fill="none" stroke="#1c2631" stroke-width="1.2"/>
<polygon points="1870.50,32.50 1874.50,29.50 1895.50,29.50 1895.50,35.50 1874.50,35.50" fill="#4aa8ee" stroke="#1c2631" stroke-width="1.1" stroke-linejoin="round"/>
<circle cx="1887.04" cy="47.41" r="10.5" fill="#f5f8fb"/>
<rect x="1884.84" y="37.41" width="4.4" height="20" rx="0.8" fill="#161d25" transform="rotate(0 1887.04 47.41)"/><rect x="1884.84" y="37.41" width="4.4" height="20" rx="0.8" fill="#161d25" transform="rotate(45 1887.04 47.41)"/><rect x="1884.84" y="37.41" width="4.4" height="20" rx="0.8" fill="#161d25" transform="rotate(90 1887.04 47.41)"/><rect x="1884.84" y="37.41" width="4.4" height="20" rx="0.8" fill="#161d25" transform="rotate(135 1887.04 47.41)"/>
<circle cx="1887.04" cy="47.41" r="7.6" fill="#161d25"/>
<circle cx="1887.04" cy="47.41" r="4.6" fill="#fff"/>
<circle cx="1887.04" cy="47.41" r="2.6" fill="none" stroke="#161d25" stroke-width="1"/>
<polygon points="7.50,108.50 24.50,108.50 24.50,125.50 7.50,125.50" fill="#fff" stroke="#555e68" stroke-width="1.2" stroke-linejoin="round"/>
<path d="M5.95,107.31 Q5.95,106.42 7.14,106.24 L9.52,106.24 Q11.01,103.14 14.58,101.65 Q13.99,100.17 14.58,98.98 Q15.95,97.79 17.38,98.98 Q17.86,100.29 17.38,101.65 Q20.83,103.14 22.32,106.24 L24.40,106.24 Q25.60,106.42 25.60,107.31 Q25.60,108.20 24.40,108.32 L7.14,108.32 Q5.95,108.20 5.95,107.31 Z" fill="#1a2028"/>
<line x1="12.98" y1="113.14" x2="12.98" y2="119.69" stroke="#a4d8f6" stroke-width="1.6"/>
<line x1="18.15" y1="113.14" x2="18.15" y2="119.69" stroke="#a4d8f6" stroke-width="1.6"/>
<polyline points="48.50,104.50 42.50,104.50 42.50,121.50 68.50,121.50 68.50,104.50 62.50,104.50" fill="none" stroke="#46505b" stroke-width="1.1" stroke-linejoin="round" stroke-linecap="round"/>
<path d="M51.4,102.4 a1.9,1.9 0 1 0 0,3.6" fill="none" stroke="#3f9fe8" stroke-width="1.1"/>
<path d="M60.5,102.4 a1.9,1.9 0 1 1 0,3.6" fill="none" stroke="#3f9fe8" stroke-width="1.1"/>
<polygon points="16.50,157.50 24.50,157.50 29.50,162.50 29.50,174.50 16.50,174.50" fill="#cfe6f8" stroke="#46505b" stroke-width="1.1" stroke-linejoin="round"/>
<polygon points="8.50,165.50 21.50,165.50 21.50,183.50 8.50,183.50" fill="#4aa8ee" stroke="#46505b" stroke-width="1.1" stroke-linejoin="round"/>
<line x1="4.60" y1="162.88" x2="8.82" y2="158.67" stroke="#46505b" stroke-width="1"/>
<circle cx="3.45" cy="164.03" r="1.8" fill="none" stroke="#3f9fe8" stroke-width="1"/>
<circle cx="9.97" cy="157.52" r="1.8" fill="none" stroke="#3f9fe8" stroke-width="1"/>
<line x1="42.55" y1="170.50" x2="53.28" y2="170.50" stroke="#46505b" stroke-width="1.1"/>
<line x1="59.41" y1="170.50" x2="69.38" y2="170.50" stroke="#46505b" stroke-width="1.1"/>
<polyline points="53.50,168.50 56.50,170.50 53.50,173.50" fill="none" stroke="#7fc0f0" stroke-width="1" stroke-linejoin="round" stroke-linecap="round"/>
<polyline points="59.50,168.50 56.50,170.50 59.50,173.50" fill="none" stroke="#7fc0f0" stroke-width="1" stroke-linejoin="round" stroke-linecap="round"/>
<polygon points="2.50,215.50 20.50,215.50 20.50,240.50 2.50,240.50" fill="#fff" stroke="#46505b" stroke-width="1.1" stroke-linejoin="round"/>
<line x1="6.71" y1="219.50" x2="16.29" y2="219.50" stroke="#46505b" stroke-width="1"/>
<line x1="6.71" y1="222.50" x2="16.29" y2="222.50" stroke="#46505b" stroke-width="1"/>
<line x1="6.71" y1="225.50" x2="16.29" y2="225.50" stroke="#46505b" stroke-width="1"/>
<polygon points="11.50,230.50 24.50,230.50 29.50,234.50 29.50,241.50 11.50,241.50" fill="#4aa8ee" stroke="#46505b" stroke-width="1.1" stroke-linejoin="round"/>
<line x1="42.55" y1="228.50" x2="50.59" y2="228.50" stroke="#46505b" stroke-width="1.1"/>
<line x1="55.19" y1="228.50" x2="57.88" y2="228.50" stroke="#46505b" stroke-width="1.1"/>
<line x1="60.18" y1="228.50" x2="61.33" y2="228.50" stroke="#46505b" stroke-width="1.1"/>
<line x1="61.33" y1="234.37" x2="69.57" y2="221.53" stroke="#3f9fe8" stroke-width="1.1"/>
<rect x="2.3" y="278.9" width="7.3" height="18.0" rx="1.5" fill="none" stroke="#8cc8f2" stroke-width="1" stroke-dasharray="2,1.6"/>
<polygon points="9.50,288.50 29.50,288.50 29.50,296.50 9.50,296.50" fill="none" stroke="#46505b" stroke-width="1.1" stroke-linejoin="round"/>
<path d="M13.4,276.6 Q24.0,275.6 24.0,284.7" fill="none" stroke="#46505b" stroke-width="1.1"/>
<polyline points="20.50,281.50 23.50,285.50 26.50,280.50" fill="none" stroke="#46505b" stroke-width="1.1" stroke-linejoin="round" stroke-linecap="round"/>
<polyline points="45.50,276.50 45.50,296.50 63.50,296.50 67.50,284.50" fill="none" stroke="#46505b" stroke-width="1.1" stroke-linejoin="round" stroke-linecap="round"/>
<circle cx="45.04" cy="276.46" r="2" fill="#f5f8fb" stroke="#3f9fe8" stroke-width="1"/>
<circle cx="45.04" cy="296.20" r="2" fill="#f5f8fb" stroke="#3f9fe8" stroke-width="1"/>
<circle cx="63.24" cy="296.20" r="2" fill="#f5f8fb" stroke="#3f9fe8" stroke-width="1"/>
<circle cx="67.46" cy="284.12" r="2" fill="#f5f8fb" stroke="#3f9fe8" stroke-width="1"/>
<line x1="2.68" y1="344.50" x2="29.32" y2="344.50" stroke="#46505b" stroke-width="1.1"/>
<line x1="15.50" y1="330.50" x2="15.50" y2="357.91" stroke="#46505b" stroke-width="1.1"/>
<polyline points="6.50,340.50 2.50,344.50 6.50,347.50" fill="none" stroke="#46505b" stroke-width="1.1" stroke-linejoin="round" stroke-linecap="round"/>
<polyline points="25.50,340.50 29.50,344.50 25.50,347.50" fill="none" stroke="#46505b" stroke-width="1.1" stroke-linejoin="round" stroke-linecap="round"/>
<polyline points="11.50,334.50 15.50,330.50 19.50,334.50" fill="none" stroke="#46505b" stroke-width="1.1" stroke-linejoin="round" stroke-linecap="round"/>
<polyline points="11.50,353.50 15.50,358.50 19.50,353.50" fill="none" stroke="#46505b" stroke-width="1.1" stroke-linejoin="round" stroke-linecap="round"/>
<circle cx="15.71" cy="344.11" r="1.8" fill="#f5f8fb" stroke="#3f9fe8" stroke-width="1"/>
<polygon points="42.50,346.50 46.50,351.50 46.50,369.50 42.50,363.50" fill="#cfe6f8" stroke="#46505b" stroke-width="1" stroke-linejoin="round"/>
<polygon points="47.50,347.50 63.50,347.50 66.50,353.50 50.50,353.50" fill="#cfe6f8" stroke="#46505b" stroke-width="1" stroke-linejoin="round"/>
<polygon points="64.50,346.50 68.50,352.50 68.50,369.50 64.50,364.50" fill="#cfe6f8" stroke="#46505b" stroke-width="1" stroke-linejoin="round"/>
<polygon points="47.50,358.50 64.50,358.50 64.50,372.50 47.50,372.50" fill="#cfe6f8" stroke="#46505b" stroke-width="1.1" stroke-linejoin="round"/>
<path d="M29.13,403.52 L19.55,403.52 L19.55,396.62 A5.2,5.2 0 0 0 9.20,396.62 L9.20,403.52 L7.67,403.52 A5,5 0 0 0 7.67,413.48 L29.13,413.48" fill="none" stroke="#46505b" stroke-width="1.2"/>
<path d="M29.13,406.58 L16.48,406.58 L16.48,396.62 A2.2,2.2 0 0 0 12.27,396.62 L12.27,406.58 L7.67,406.58 A2,2 0 0 0 7.67,410.42 L29.13,410.42" fill="none" stroke="#3f9fe8" stroke-width="1"/>
<polygon points="19.50,447.50 28.50,447.50 28.50,473.50 19.50,473.50" fill="#e4f1fb" stroke="#7fc0f0" stroke-width="1" stroke-linejoin="round"/>
<polygon points="2.50,447.50 19.50,447.50 19.50,473.50 2.50,473.50" fill="none" stroke="#46505b" stroke-width="1.1" stroke-linejoin="round"/>
<line x1="8.62" y1="466.50" x2="26.45" y2="466.50" stroke="#46505b" stroke-width="1.1"/>
<polyline points="22.50,462.50 26.50,466.50 22.50,470.50" fill="none" stroke="#46505b" stroke-width="1.1" stroke-linejoin="round" stroke-linecap="round"/>
<polygon points="5.50,508.50 28.50,508.50 28.50,525.50 5.50,525.50" fill="none" stroke="#46505b" stroke-width="1.1" stroke-linejoin="round"/>
<polygon points="2.50,520.50 13.50,520.50 13.50,528.50 2.50,528.50" fill="none" stroke="#46505b" stroke-width="1.1" stroke-linejoin="round"/>
<line x1="17.25" y1="517.53" x2="25.49" y2="511.21" stroke="#3f9fe8" stroke-width="1" stroke-dasharray="2,1.4"/>
<polyline points="22.50,510.50 26.50,510.50 26.50,514.50" fill="none" stroke="#3f9fe8" stroke-width="1" stroke-linejoin="round" stroke-linecap="round"/>
<polygon points="2.50,562.50 13.50,562.50 13.50,574.50 2.50,574.50" fill="#cfe6f8" stroke="#5a6470" stroke-width="1" stroke-linejoin="round"/>
<polygon points="17.50,562.50 28.50,562.50 28.50,574.50 17.50,574.50" fill="none" stroke="#5a6470" stroke-width="1" stroke-linejoin="round"/>
<polygon points="2.50,577.50 13.50,577.50 13.50,589.50 2.50,589.50" fill="none" stroke="#5a6470" stroke-width="1" stroke-linejoin="round"/>
<polygon points="17.50,577.50 28.50,577.50 28.50,589.50 17.50,589.50" fill="none" stroke="#5a6470" stroke-width="1" stroke-linejoin="round"/>
<polyline points="2.50,647.50 2.50,620.50 29.50,620.50" fill="none" stroke="#46505b" stroke-width="1.1" stroke-linejoin="round" stroke-linecap="round"/>
<path d="M2.7,631.2 Q3.7,624.0 14.4,621.0" fill="none" stroke="#3f9fe8" stroke-width="1" stroke-dasharray="2,1.6"/>
<line x1="2.87" y1="692.50" x2="29.13" y2="692.50" stroke="#46505b" stroke-width="1.1"/>
<line x1="9.50" y1="682.91" x2="9.50" y2="701.31" stroke="#46505b" stroke-width="1.1"/>
<line x1="22.50" y1="682.91" x2="22.50" y2="701.31" stroke="#46505b" stroke-width="1.1"/>
<circle cx="9.20" cy="691.53" r="1.6" fill="none" stroke="#3f9fe8" stroke-width="0.9"/>
<circle cx="22.61" cy="691.53" r="1.6" fill="none" stroke="#3f9fe8" stroke-width="0.9"/>
<line x1="2.30" y1="749.50" x2="13.42" y2="749.50" stroke="#46505b" stroke-width="1.1"/>
<line x1="16.86" y1="749.50" x2="19.16" y2="749.50" stroke="#46505b" stroke-width="1.1"/>
<line x1="20.70" y1="749.50" x2="21.85" y2="749.50" stroke="#46505b" stroke-width="1.1"/>
<line x1="21.08" y1="755.73" x2="29.13" y2="743.85" stroke="#3f9fe8" stroke-width="1.1"/>
<polygon points="1.50,799.50 13.50,807.50 1.50,815.50" fill="#cfe6f8" stroke="#5a6470" stroke-width="1" stroke-linejoin="round"/>
<polygon points="29.50,799.50 17.50,807.50 29.50,816.50" fill="#4aa8ee" stroke="#5a6470" stroke-width="1" stroke-linejoin="round"/>
<line x1="15.50" y1="794.05" x2="15.50" y2="821.94" stroke="#1c2631" stroke-width="1" stroke-dasharray="2.6,1.6"/>
</svg>
</body></html>
